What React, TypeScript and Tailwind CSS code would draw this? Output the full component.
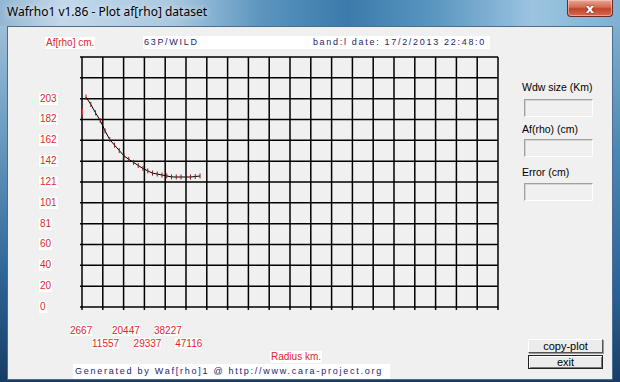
import React from "react";

// curve samples read off the plot (window coords)
const curve: [number, number][] = [
  [86, 97], [90, 103], [95, 112], [100, 120], [104, 129], [110, 140],
  [117, 148], [125, 157], [133, 162], [142, 168], [152, 173], [162, 175],
  [172, 177], [182, 177], [192, 177], [199, 176],
];

// svg origin sits at window (80, 55)
const OX = 80;
const OY = 55;

function yAt(x: number) {
  for (let i = 0; i < curve.length - 1; i++) {
    const [x0, y0] = curve[i];
    const [x1, y1] = curve[i + 1];
    if (x >= x0 && x <= x1) return y0 + ((y1 - y0) * (x - x0)) / (x1 - x0);
  }
  return curve[curve.length - 1][1];
}

const samples = Array.from({ length: 25 }, (_, k) => {
  const x = 86 + k * 4.75;
  return [x - OX, yAt(x) - OY] as [number, number];
});

const yLabels = ["203", "182", "162", "142", "121", "101", "81", "60", "40", "20", "0"];
const COL = 20.8;
const ROW = 250 / 12;

function Plot() {
  const cols = Array.from({ length: 21 }, (_, i) => 2 + i * COL);
  const rows = Array.from({ length: 13 }, (_, j) => 2 + j * ROW);
  return (
    <svg width={421} height={256} className="block shrink-0">
      {cols.map((x, i) => (
        <line key={"v" + i} x1={x} y1={2} x2={x} y2={255} stroke="#000" strokeWidth={1.5} />
      ))}
      {rows.map((y, j) => (
        <line key={"h" + j} x1={0} y1={y} x2={418} y2={y} stroke="#000" strokeWidth={1.5} />
      ))}
      <line x1={2.5} y1={54} x2={2.5} y2={60} stroke="#e04040" strokeWidth={1.2} />
      <polyline
        points={samples.map(([x, y]) => `${x},${y}`).join(" ")}
        fill="none"
        stroke="#000"
        strokeWidth={1}
      />
      {samples.map(([x, y], k) => (
        <line key={"e" + k} x1={x} y1={y - 2.5} x2={x} y2={y + 2.5} stroke="#8a1c1c" strokeWidth={1} />
      ))}
    </svg>
  );
}

function Sunken() {
  return (
    <div className="ml-[2px] w-[69px] h-[18px] border border-t-[#a0a0a0] border-l-[#a0a0a0] border-b-white border-r-white bg-[#f0f0f0] shadow-[inset_1px_1px_0_#d4d4d4]" />
  );
}

export default function App() {
  return (
    <div className="w-[620px] h-[382px] flex flex-col overflow-hidden bg-[#2a5a88] font-['Liberation_Sans',Arial,sans-serif]">
      {/* title bar */}
      <div className="h-[26px] shrink-0 flex items-start bg-[linear-gradient(90deg,#94b6d1_0%,#c2d8ea_10%,#a9c8df_28%,#5c95bf_42%,#3b7aaa_56%,#5a96c0_70%,#9cc4e0_86%,#7fb0d2_100%)]">
        <div className="pl-[7px] pt-[4px] text-[12px] leading-[16px] text-black font-['Noto_Sans',sans-serif] [text-shadow:0_0_6px_rgba(255,255,255,0.9)]">
          Wafrho1 v1.86 - Plot af[rho] dataset
        </div>
        <div className="ml-auto mr-[7px] w-[46px] h-[17px] rounded-b-[4px] border border-t-0 border-[#6a2a20] bg-[linear-gradient(180deg,#e9a695_0%,#d56a52_45%,#c1442c_55%,#d66c4f_100%)] flex items-center justify-center shadow-[inset_0_0_0_1px_rgba(255,220,210,0.5)]">
          <span className="text-white text-[13px] font-bold leading-none font-['DejaVu_Sans',sans-serif] [text-shadow:0_0_2px_#5a1a10]">x</span>
        </div>
      </div>

      <div className="flex flex-1 min-h-0">
        <div className="w-[7px] shrink-0 bg-[linear-gradient(180deg,#9dbfd8_0%,#6b9cc2_30%,#2f6596_70%,#163d66_100%)]" />

        {/* client */}
        <div className="w-[606px] h-[354px] border border-[#4d6d8d] bg-[#f0f0f0] flex">
          {/* main column */}
          <div className="w-[514px] flex flex-col">
            {/* header */}
            <div className="mt-[9px] h-[13px] flex items-center">
              <div className="w-[135px] pl-[37px] flex">
                <span className="bg-white px-[1px] text-[10px] leading-[12px] text-[#e02828]">Af[rho] cm.</span>
              </div>
              <div className="w-[347px] h-[13px] bg-white flex items-center justify-between pl-[1px] pr-[4px] text-[9px] tracking-[1.7px] text-[#25256a]">
                <span>63P/WILD</span>
                <span>band:l date: 17/2/2013 22:48:0</span>
              </div>
            </div>

            {/* plot */}
            <div className="mt-[6px] flex">
              <div className="w-[72px] pl-[31px] pt-[33.25px] flex flex-col">
                {yLabels.map((l) => (
                  <div key={l} className="h-[20.833px] flex items-center">
                    <span className="bg-white px-[1px] text-[10px] leading-[12px] text-[#e02828]">{l}</span>
                  </div>
                ))}
              </div>
              <div className="h-[256px]">
                <Plot />
              </div>
            </div>

            {/* x labels */}
            <div className="mt-[8px] h-[12px] pl-[62px] flex items-center text-[10px] leading-[12px] text-[#e02828]">
              <div className="w-[42px]"><span className="bg-white">2667</span></div>
              <div className="w-[42px]"><span className="bg-white">20447</span></div>
              <div className="w-[42px]"><span className="bg-white">38227</span></div>
            </div>
            <div className="mt-[1px] h-[12px] pl-[84px] flex items-center text-[10px] leading-[12px] text-[#e02828]">
              <div className="w-[41.6px]"><span className="bg-white">11557</span></div>
              <div className="w-[41.6px]"><span className="bg-white">29337</span></div>
              <div className="w-[41.6px]"><span className="bg-white">47116</span></div>
            </div>
            <div className="mt-[1px] h-[12px] pl-[262px] flex items-center">
              <span className="bg-white px-[1px] text-[10px] leading-[12px] text-[#e02828]">Radius km.</span>
            </div>
            <div className="mt-[1px] ml-[65px] w-[317px] h-[17px] bg-white flex items-center pl-[2px] text-[9px] tracking-[1.75px] text-[#25256a] whitespace-nowrap">
              Generated by Waf[rho]1 @ http://www.cara-project.org
            </div>
          </div>

          {/* side panel */}
          <div className="flex-1 flex flex-col pt-[54px] pb-[10px] text-[10.5px] leading-[13px] text-black">
            <div className="h-[13px]">Wdw size (Km)</div>
            <div className="mt-[5px]"><Sunken /></div>
            <div className="mt-[6px] h-[13px]">Af(rho) (cm)</div>
            <div className="mt-[3px]"><Sunken /></div>
            <div className="mt-[9px] h-[13px]">Error (cm)</div>
            <div className="mt-[4px]"><Sunken /></div>

            <div className="mt-auto ml-[6px] w-[75px] flex flex-col gap-[2px]">
              <button className="h-[14px] border border-t-white border-l-white border-b-[#555] border-r-[#555] bg-[#ececec] text-[11px] leading-[12px] text-black shadow-[1px_1px_0_#999]">
                copy-plot
              </button>
              <button className="h-[14px] border border-[#222] bg-[#ececec] text-[11px] leading-[12px] text-black shadow-[inset_1px_1px_0_#fff,inset_-1px_-1px_0_#777]">
                exit
              </button>
            </div>
          </div>
        </div>

        <div className="w-[7px] shrink-0 bg-[linear-gradient(180deg,#7eaed0_0%,#4b87b5_35%,#2b6296_75%,#173f6a_100%)]" />
      </div>
      <div className="h-[2px] shrink-0 bg-[#1a3c63]" />
    </div>
  );
}
